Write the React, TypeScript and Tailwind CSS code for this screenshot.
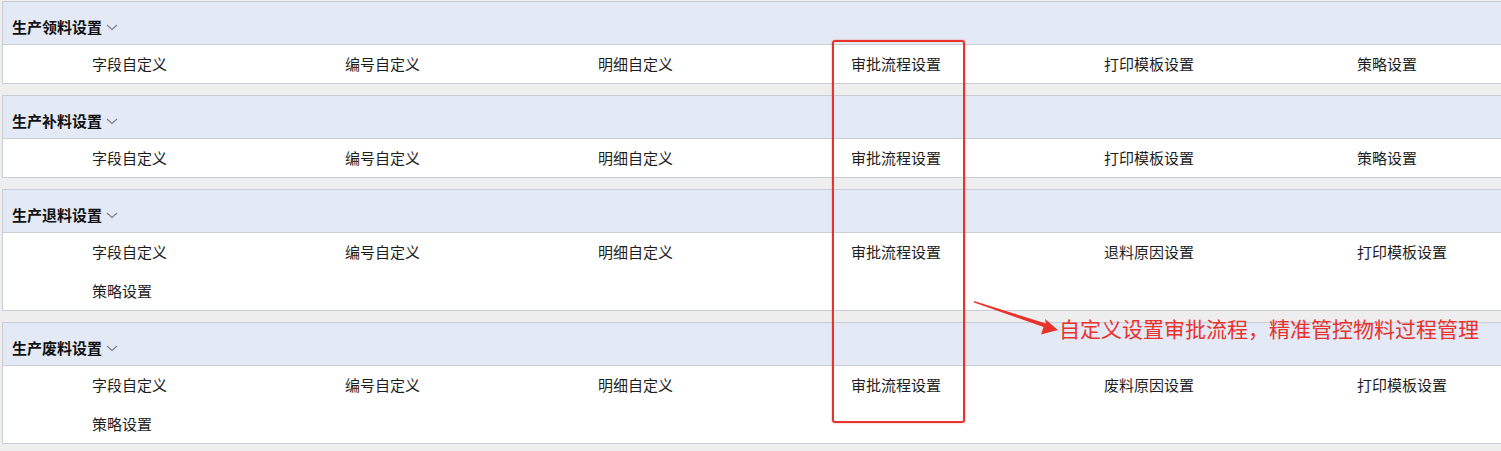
import React from 'react';

interface SectionProps {
  title: string;
  items: string[];
}

const sections: SectionProps[] = [
  { title: '生产领料设置', items: ['字段自定义', '编号自定义', '明细自定义', '审批流程设置', '打印模板设置', '策略设置'] },
  { title: '生产补料设置', items: ['字段自定义', '编号自定义', '明细自定义', '审批流程设置', '打印模板设置', '策略设置'] },
  {
    title: '生产退料设置',
    items: ['字段自定义', '编号自定义', '明细自定义', '审批流程设置', '退料原因设置', '打印模板设置', '策略设置'],
  },
  {
    title: '生产废料设置',
    items: ['字段自定义', '编号自定义', '明细自定义', '审批流程设置', '废料原因设置', '打印模板设置', '策略设置'],
  },
];

const Chevron: React.FC = () => (
  <svg width="12" height="7" viewBox="0 0 12 7" className="ml-[4px] mt-[1px]">
    <polyline points="1,1 6,5.5 11,1" fill="none" stroke="#7a7f88" strokeWidth="1.1" />
  </svg>
);

const Section: React.FC<SectionProps> = ({ title, items }) => (
  <div className="w-[1520px] border border-[#c8cdd6] bg-white">
    <div className="h-[43px] bg-[#e3eaf6] border-b border-[#c8cdd6] pl-[9px] pt-[15px]">
      <div className="flex items-center leading-[20px]">
        <span className="text-[15px] font-bold text-[#111]">{title}</span>
        <Chevron />
      </div>
    </div>
    <div className="grid grid-cols-[repeat(6,253px)] auto-rows-[38px] gap-y-px">
      {items.map((item, i) => (
        <div key={i} className="flex items-center pl-[89px] text-[15px] text-[#1e1e1e]">
          {item}
        </div>
      ))}
    </div>
  </div>
);

export default function App() {
  return (
    <div
      className="relative w-[1501px] h-[451px] overflow-hidden bg-[#eeeeee]"
      style={{ fontFamily: '"Noto Sans CJK SC", "Noto Sans", sans-serif' }}
    >
      <div className="flex flex-col gap-[11px] pt-px pl-[2px]">
        {sections.map((s) => (
          <Section key={s.title} {...s} />
        ))}
      </div>

      {/* annotation overlay */}
      <div className="absolute left-[832px] top-[40px] w-[133px] h-[383px] border-2 border-[#e8322c] rounded-[3px] shadow-[0_0_2px_rgba(232,50,44,0.5)]" />
      <svg className="absolute left-[970px] top-[298px]" width="95" height="40" viewBox="0 0 95 40">
        <polygon points="4,3 76,25.5 75,21 88,32 71,36.5 73.5,29 4,4.5" fill="#e8322c" />
      </svg>
      <div className="absolute left-[1059px] top-[314px] text-[21px] leading-[28px] text-[#e8322c] whitespace-nowrap">
        自定义设置审批流程，精准管控物料过程管理
      </div>
    </div>
  );
}
